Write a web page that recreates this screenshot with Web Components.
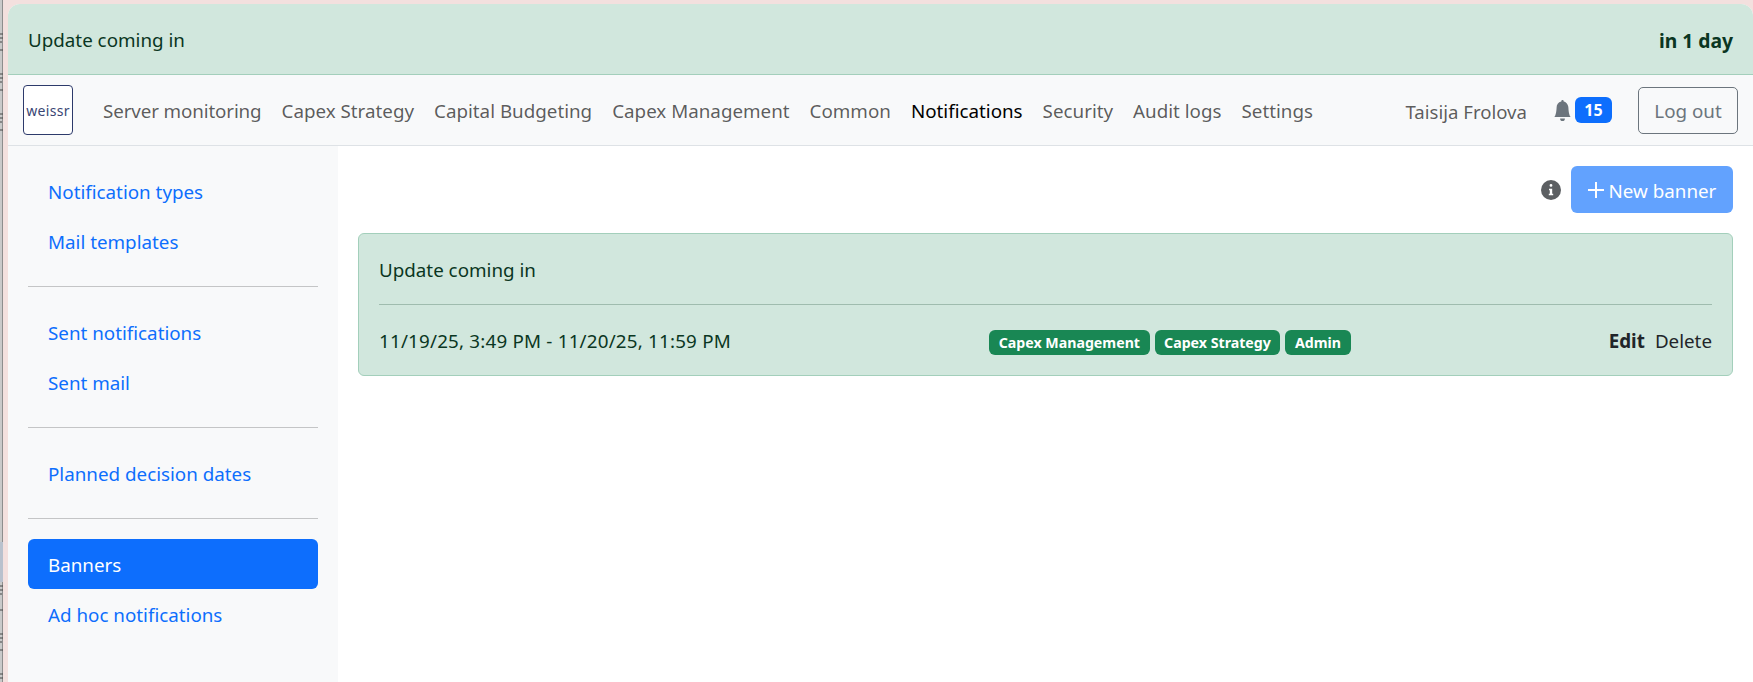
<!doctype html>
<html lang="en">
<head>
<meta charset="utf-8">
<title>Banners</title>
<style>
  html, body { margin: 0; height: 100%; }
  body {
    background: #f3e0de;
    font-family: "Noto Sans", "Open Sans", sans-serif;
    font-size: 18.8px;
    overflow: hidden;
  }
</style>
</head>
<body>
<desktop-frame>
  <top-banner>
    Update coming in
    <b slot="end">in 1 day</b>
  </top-banner>
  <main-navbar>
    <nav-link style="letter-spacing: -.13px">Server monitoring</nav-link>
    <nav-link>Capex Strategy</nav-link>
    <nav-link>Capital Budgeting</nav-link>
    <nav-link>Capex Management</nav-link>
    <nav-link>Common</nav-link>
    <nav-link active>Notifications</nav-link>
    <nav-link>Security</nav-link>
    <nav-link>Audit logs</nav-link>
    <nav-link>Settings</nav-link>
  </main-navbar>
  <page-layout>
    <side-menu slot="side">
      <side-link>Notification types</side-link>
      <side-link>Mail templates</side-link>
      <side-divider></side-divider>
      <side-link>Sent notifications</side-link>
      <side-link>Sent mail</side-link>
      <side-divider></side-divider>
      <side-link>Planned decision dates</side-link>
      <side-divider tight></side-divider>
      <side-link active low>Banners</side-link>
      <side-link low>Ad hoc notifications</side-link>
    </side-menu>
    <banner-toolbar></banner-toolbar>
    <banner-card range="11/19/25, 3:49 PM - 11/20/25, 11:59 PM">
      Update coming in
      <role-tag slot="tags">Capex Management</role-tag>
      <role-tag slot="tags">Capex Strategy</role-tag>
      <role-tag slot="tags">Admin</role-tag>
    </banner-card>
  </page-layout>
</desktop-frame>

<script>
  const define = (name, html, init) => {
    customElements.define(name, class extends HTMLElement {
      constructor() {
        super();
        this.attachShadow({ mode: "open" });
        this.shadowRoot.innerHTML = html;
        if (init) init(this);
      }
    });
  };

  // whatever window sits behind the browser: a sliver of it shows on the left
  define("desktop-frame", /* HTML */ `
    <style>
      :host { display: flex; height: 100vh; }
      #edge { flex: none; width: 8px; display: block; }
      #app {
        flex: 1;
        min-width: 0;
        display: flex;
        flex-direction: column;
        margin-top: 4px;
        background: #fff;
        border-radius: 12px 12px 0 0;
        overflow: hidden;
      }
    </style>
    <svg id="edge" width="8" height="682" viewBox="0 0 8 682">
      <rect width="3" height="682" fill="#c9c9c9"/>
      <rect x="2" width="1" height="682" fill="#8d8d8d"/>
      <rect y="542" width="3" height="40" fill="#b9c1cd"/>
      <path d="M0 34h3M0 38h3M0 42h2M0 50h3M0 74h3M0 78h3M0 82h2M0 90h3M0 114h3M0 118h3M0 122h2M0 130h3M0 586h3M0 590h3M0 594h2M0 610h3M0 634h3M0 638h3M0 642h2M0 650h3M0 674h3M0 678h3" stroke="#444" stroke-width="1"/>
    </svg>
    <div id="app"><slot></slot></div>
  `);

  define("top-banner", /* HTML */ `
    <style>
      :host {
        display: flex;
        justify-content: space-between;
        align-items: center;
        flex: none;
        height: 68px;
        padding: 2px 20px 0;
        background: #d1e7dd;
        border-bottom: 1px solid #a3cfbb;
        color: #0a3622;
      }
      ::slotted(b) { font-weight: 700; font-size: 19.3px; }
    </style>
    <span><slot></slot></span>
    <slot name="end"></slot>
  `);

  define("main-navbar", /* HTML */ `
    <style>
      :host {
        display: flex;
        align-items: center;
        flex: none;
        height: 70px;
        padding: 0 15px;
        background: #f8f9fa;
        border-bottom: 1px solid #dee2e6;
      }
      #logo {
        flex: none;
        width: 48px;
        height: 48px;
        display: grid;
        place-items: center;
        margin-right: 30px;
        background: #fff;
        border: 1px solid #2d3a6b;
        border-radius: 4px;
        color: #3a4674;
        font-size: 14px;
        letter-spacing: .3px;
      }
      #links { display: flex; gap: 20px; padding-top: 2px; }
      #user {
        margin-left: auto;
        padding-top: 2px;
        font-size: 18.6px;
        color: rgba(0, 0, 0, .65);
      }
      #bell { margin-left: 26px; margin-right: 3px; display: block; }
      #count {
        min-width: 37px;
        height: 26px;
        display: grid;
        place-items: center;
        background: #0d6efd;
        color: #fff;
        border-radius: 6px;
        font-size: 16px;
        font-weight: 700;
      }
      #logout {
        margin-left: 26px;
        width: 100px;
        height: 47px;
        padding-top: 2px;
        display: grid;
        place-items: center;
        box-sizing: border-box;
        border: 1px solid #6c757d;
        border-radius: 5px;
        color: #6c757d;
      }
    </style>
    <div id="logo">weissr</div>
    <div id="links"><slot></slot></div>
    <span id="user">Taisija Frolova</span>
    <svg id="bell" width="19" height="21" viewBox="0 0 16 16" fill="#6c757d" preserveAspectRatio="none">
      <path d="M8 16a2 2 0 0 0 2-2H6a2 2 0 0 0 2 2zm.995-14.901a1 1 0 1 0-1.99 0A5.002 5.002 0 0 0 3 6c0 1.098-.5 6-2 7h14c-1.5-1-2-5.902-2-7 0-2.42-1.72-4.44-4.005-4.901z"/>
    </svg>
    <div id="count">15</div>
    <div id="logout">Log out</div>
  `);

  define("nav-link", /* HTML */ `
    <style>
      :host { display: block; color: rgba(0, 0, 0, .65); white-space: nowrap; }
      :host([active]) { color: #000; }
    </style>
    <slot></slot>
  `);

  define("page-layout", /* HTML */ `
    <style>
      :host { display: flex; flex: 1; min-height: 0; }
      #side { flex: none; width: 330px; background: #f8f9fa; }
      #content {
        flex: 1;
        min-width: 0;
        padding: 20px 20px 0 20px;
        display: flex;
        flex-direction: column;
        gap: 20px;
      }
    </style>
    <div id="side"><slot name="side"></slot></div>
    <div id="content"><slot></slot></div>
  `);

  define("side-menu", /* HTML */ `
    <style>
      :host { display: block; padding: 21px 20px 0 20px; }
    </style>
    <slot></slot>
  `);

  define("side-link", /* HTML */ `
    <style>
      :host {
        display: flex;
        align-items: center;
        box-sizing: border-box;
        height: 50px;
        padding: 0 20px;
        border-radius: 6px;
        color: #0d6efd;
      }
      :host([low]) { padding-top: 2px; }
      :host([active]) { background: #0d6efd; color: #fff; }
    </style>
    <slot></slot>
  `);

  define("side-divider", /* HTML */ `
    <style>
      :host {
        display: block;
        height: 1px;
        margin: 19px 0 21px;
        background: #c4c5c6;
      }
      :host([tight]) { margin-bottom: 20px; }
    </style>
  `);

  define("banner-toolbar", /* HTML */ `
    <style>
      :host { display: flex; justify-content: flex-end; align-items: center; gap: 10px; }
      #add {
        display: flex;
        align-items: center;
        gap: 5px;
        height: 47px;
        width: 162px;
        padding-top: 3px;
        box-sizing: border-box;
        justify-content: center;
        background: #62a2fe;
        color: #fff;
        border-radius: 6px;
        white-space: nowrap;
      }
      #add svg { margin-top: -3px; }
    </style>
    <svg width="20" height="20" viewBox="0 0 20 20">
      <circle cx="10" cy="10" r="10" fill="#5c5f62"/>
      <path d="M8.6 5.6a1.4 1.4 0 1 0 2.8 0 1.4 1.4 0 0 0-2.8 0zM8 9h3.2v5H12.2v1.4H7.8V14h1v-3.6H8z" fill="#fff" transform="translate(0 -.2)"/>
    </svg>
    <div id="add">
      <svg width="16" height="16" viewBox="0 0 16 16"><path d="M8 0v16M0 8h16" stroke="#fff" stroke-width="2"/></svg>
      <span>New banner</span>
    </div>
  `);

  define("banner-card", /* HTML */ `
    <style>
      :host {
        display: block;
        height: 143px;
        box-sizing: border-box;
        padding: 0 20px;
        background: #d1e7dd;
        border: 1px solid #a3cfbb;
        border-radius: 6px;
        color: #0a3622;
      }
      #title { height: 68px; padding-top: 2px; display: flex; align-items: center; border-bottom: 1px solid #9fbcae; }
      #meta {
        height: 71px;
        display: flex;
        justify-content: space-between;
        align-items: center;
      }
      #range { letter-spacing: .2px; }
      #tags { display: flex; gap: 5px; padding-top: 3px; }
      #actions { display: flex; gap: 10px; color: #212529; }
      b { font-weight: 700; }
    </style>
    <div id="title"><span><slot></slot></span></div>
    <div id="meta">
      <span id="range"></span>
      <div id="tags"><slot name="tags"></slot></div>
      <div id="actions"><b>Edit</b><span>Delete</span></div>
    </div>
  `, (el) => {
    el.shadowRoot.getElementById("range").textContent = el.getAttribute("range");
  });

  define("role-tag", /* HTML */ `
    <style>
      :host {
        display: block;
        height: 25px;
        line-height: 25px;
        padding: 0 9.5px;
        background: #198754;
        color: #fff;
        border-radius: 6px;
        font-size: 14.2px;
        font-weight: 700;
        white-space: nowrap;
      }
    </style>
    <slot></slot>
  `);
</script>
</body>
</html>
